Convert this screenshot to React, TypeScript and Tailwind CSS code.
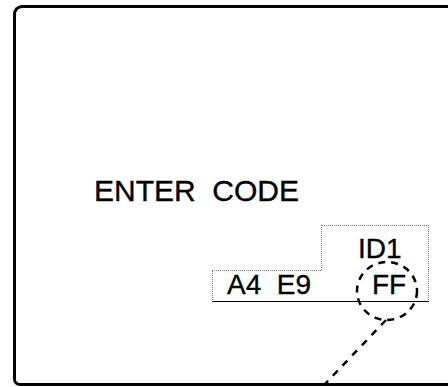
import React from "react";

export default function App() {
  const font = { fontFamily: '"Liberation Sans", Arial, sans-serif' };
  return (
    <div className="relative w-[448px] h-[387px] bg-white overflow-hidden text-black [-webkit-text-stroke:0.35px_black]" style={font}>
      <div className="ml-[13px] mt-[5px] w-[436px] h-[381px] border-[3px] border-r-0 border-black rounded-tl-[9px] rounded-bl-[7px] flex flex-col">
        <div className="ml-[78px] mt-[168px] text-[30px] leading-[30px] whitespace-pre">ENTER  CODE</div>
        <div className="ml-[196px] mt-[19px] w-[217px] flex flex-col">
          <div className="self-end w-[108px] h-[45px] border-t border-l border-r border-dotted border-[#777] pl-[36px] pt-[9px]">
            <span className="block text-[28px] leading-[28px]">ID1</span>
          </div>
          <div className="flex">
            <div className="w-[109px] h-[32px] border-t border-l border-dotted border-[#777] pl-[14px] text-[28px] leading-[28px] whitespace-pre" style={{ borderBottom: "1px solid #000" }}>
              A4  E9
            </div>
            <div className="w-[108px] h-[32px] border-t border-t-transparent border-r border-dotted border-r-[#777] pl-[51px] text-[28px] leading-[28px]" style={{ borderBottom: "1px solid #000" }}>
              FF
            </div>
          </div>
        </div>
      </div>
      <svg className="absolute inset-0" width="448" height="387" viewBox="0 0 448 387">
        <ellipse cx="387" cy="291" rx="30" ry="29" fill="none" stroke="#000" strokeWidth="2.5" strokeDasharray="7 6" />
        <line x1="386" y1="320" x2="325" y2="384" stroke="#000" strokeWidth="2.5" strokeDasharray="7 7" />
      </svg>
    </div>
  );
}
